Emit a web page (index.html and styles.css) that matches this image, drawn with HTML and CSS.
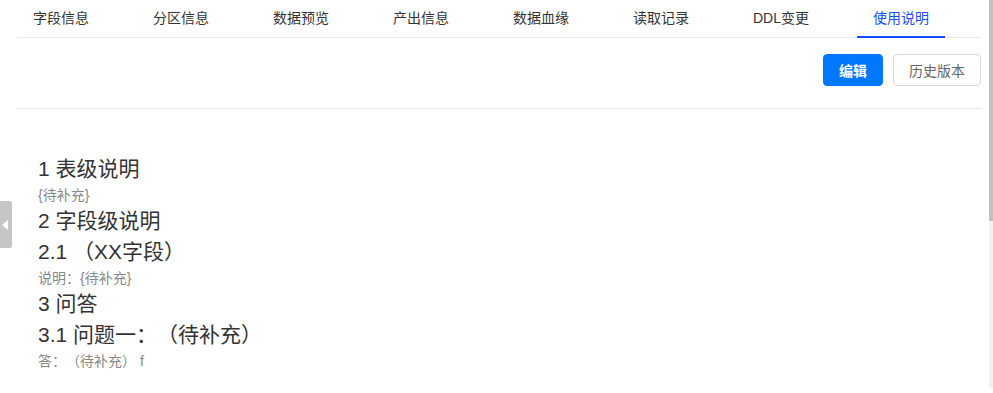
FILE: index.html
```html
<!DOCTYPE html>
<html lang="zh-CN">
<head>
<meta charset="utf-8">
<title>使用说明</title>
<link rel="stylesheet" href="styles.css">
</head>
<body>
<div class="page">
  <nav class="tabs">
    <a class="tab">字段信息</a>
    <a class="tab">分区信息</a>
    <a class="tab">数据预览</a>
    <a class="tab">产出信息</a>
    <a class="tab">数据血缘</a>
    <a class="tab">读取记录</a>
    <a class="tab">DDL变更</a>
    <a class="tab active">使用说明</a>
  </nav>
  <div class="toolbar">
    <button class="btn btn-primary">编辑</button>
    <button class="btn btn-default">历史版本</button>
  </div>
  <div class="doc">
    <h1 class="h1">1 表级说明</h1>
    <p class="note">{待补充}</p>
    <h1 class="h1">2 字段级说明</h1>
    <h2 class="h2">2.1 （XX字段）</h2>
    <p class="note">说明：{待补充}</p>
    <h1 class="h1">3 问答</h1>
    <h2 class="h2">3.1 问题一：（待补充）</h2>
    <p class="note">答：（待补充） f</p>
  </div>
</div>
<div class="side-toggle"><span class="arrow"></span></div>
<div class="scrollbar"><div class="thumb"></div></div>
</body>
</html>
```
FILE: styles.css
```css
html, body {
  margin: 0;
  padding: 0;
  background: #fff;
  font-family: "Liberation Sans", "Noto Sans CJK SC", Arial, sans-serif;
  color: #333;
  overflow: hidden;
  text-spacing-trim: space-all;
}
.page {
  padding: 0 12px 0 17px;
}
.tabs {
  display: flex;
  gap: 32px;
  height: 37px;
  border-bottom: 1px solid #e8e8e8;
}
.tab {
  display: block;
  width: 88px;
  text-align: center;
  font-size: 14px;
  line-height: 37px;
  color: #333;
  box-sizing: border-box;
  position: relative;
}
.tab.active {
  color: #1a4cff;
}
.tab.active::after {
  content: "";
  position: absolute;
  left: 0;
  right: 0;
  bottom: -1px;
  height: 2px;
  background: #1a4cff;
}
.toolbar {
  display: flex;
  justify-content: flex-end;
  gap: 10px;
  padding: 16px 0 22px;
  border-bottom: 1px solid #e8e8e8;
}
.btn {
  height: 32px;
  border-radius: 4px;
  font-family: inherit;
  font-size: 14px;
  padding: 0;
  cursor: pointer;
}
.btn-primary {
  width: 60px;
  background: #0077ff;
  border: 1px solid #0077ff;
  color: #fff;
  font-weight: bold;
}
.btn-default {
  width: 88px;
  background: #fff;
  border: 1px solid #d9d9d9;
  color: #666;
}
.doc {
  padding: 47px 20px 0 21px;
}
.h1, .h2 {
  margin: 0;
  font-size: 21px;
  font-weight: normal;
  line-height: 26px;
  color: #333;
}
.h2 {
  margin-top: 5px;
}
.note {
  margin: 0;
  font-size: 14px;
  line-height: 26px;
  color: #888;
}
.side-toggle {
  position: absolute;
  left: 0;
  top: 201px;
  width: 12px;
  height: 47px;
  background: #c6c6c6;
  border-radius: 0 2px 2px 0;
  display: flex;
  align-items: center;
}
.arrow {
  margin-left: 2px;
  width: 0;
  height: 0;
  border-top: 5px solid transparent;
  border-bottom: 5px solid transparent;
  border-right: 6px solid #fff;
}
.scrollbar {
  position: absolute;
  top: 0;
  right: 0;
  width: 4px;
  height: 388px;
  background: #f1f1f1;
}
.thumb {
  height: 221px;
  background: #c1c1c1;
}
```
